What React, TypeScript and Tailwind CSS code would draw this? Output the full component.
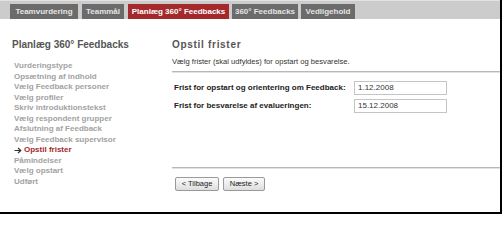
import React from "react";

const tabs = [
  { label: "Teamvurdering", w: "w-[68px]", active: false },
  { label: "Teammål", w: "w-[42px]", active: false },
  { label: "Planlæg 360° Feedbacks", w: "w-[101px]", active: true },
  { label: "360° Feedbacks", w: "w-[66px]", active: false },
  { label: "Vedligehold", w: "w-[54px]", active: false },
];

const nav = [
  "Vurderingstype",
  "Opsætning af indhold",
  "Vælg Feedback personer",
  "Vælg profiler",
  "Skriv introduktionstekst",
  "Vælg respondent grupper",
  "Afslutning af Feedback",
  "Vælg Feedback supervisor",
  "Opstil frister",
  "Påmindelser",
  "Vælg opstart",
  "Udført",
];

export default function App() {
  return (
    <div
      className="w-[502px] h-[214px] box-border border-r-2 border-b-2 border-black bg-white overflow-hidden"
      style={{ fontFamily: '"Liberation Sans", Arial, sans-serif' }}
    >
      <div className="h-[19px] bg-[#cccccc] border-t border-[#e2e2e2] flex items-end pl-[10px]">
        {tabs.map((t, i) => (
          <div
            key={t.label}
            className={`${t.w} h-[15px] flex items-center justify-center text-[8px] font-bold whitespace-nowrap ${
              i === 0 ? "" : i >= 3 ? "ml-[3px]" : "ml-[4px]"
            } ${t.active ? "bg-[#a3292b] text-white" : "bg-[#6b6b6b] text-[#e4e4e4]"}`}
          >
            {t.label}
          </div>
        ))}
      </div>
      <div className="flex">
        <div className="w-[172px] shrink-0 pl-[12px] pt-[20px]">
          <div className="text-[10px] leading-[12px] font-bold text-[#555555] whitespace-nowrap">
            Planlæg 360° Feedbacks
          </div>
          <div className="mt-[10px] pl-[2px]">
            {nav.map((n) =>
              n === "Opstil frister" ? (
                <div
                  key={n}
                  className="flex items-center text-[8px] leading-[10.5px] font-bold text-[#a3292b] whitespace-nowrap"
                >
                  <svg width="8" height="7" viewBox="0 0 8 7" className="mr-[2px]">
                    <path d="M0.5 3.5H6.5M4 1L6.8 3.5L4 6" stroke="#333" strokeWidth="1.2" fill="none" />
                  </svg>
                  {n}
                </div>
              ) : (
                <div
                  key={n}
                  className="text-[8px] leading-[10.5px] font-bold text-[#a2a2a2] whitespace-nowrap"
                >
                  {n}
                </div>
              )
            )}
          </div>
        </div>
        <div className="flex-1 pt-[20px]">
          <div className="text-[10px] leading-[12px] font-bold text-[#555555] tracking-[0.7px]">
            Opstil frister
          </div>
          <div className="mt-[6px] text-[7.6px] leading-[10px] text-[#333333] whitespace-nowrap">
            Vælg frister (skal udfyldes) for opstart og besvarelse.
          </div>
          <div className="mt-[4px] h-[1px] bg-[#b8b8b8] border-b border-[#e2e2e2] box-content" />
          <div className="mt-[8px] flex flex-col gap-[4px] pl-[2px]">
            <div className="flex items-center">
              <div className="w-[180px] text-[8px] font-bold text-[#222222] whitespace-nowrap">
                Frist for opstart og orientering om Feedback:
              </div>
              <div className="w-[93px] h-[14px] border border-[#c4c4c4] bg-white flex items-center pl-[3px] text-[8px] text-[#333333]">
                1.12.2008
              </div>
            </div>
            <div className="flex items-center">
              <div className="w-[180px] text-[8px] font-bold text-[#222222] whitespace-nowrap">
                Frist for besvarelse af evalueringen:
              </div>
              <div className="w-[93px] h-[14px] border border-[#c4c4c4] bg-white flex items-center pl-[3px] text-[8px] text-[#333333]">
                15.12.2008
              </div>
            </div>
          </div>
          <div className="mt-[54px] h-[1px] bg-[#b8b8b8] border-b border-[#e2e2e2] box-content" />
          <div className="mt-[8px] flex gap-[4px] pl-[3px]">
            <div className="w-[44px] h-[14px] border border-[#9a9a9a] rounded-[2px] bg-gradient-to-b from-[#fbfbfb] to-[#dedede] flex items-center justify-center text-[7.5px] text-[#222222] whitespace-nowrap">
              &lt; Tilbage
            </div>
            <div className="w-[42px] h-[14px] border border-[#9a9a9a] rounded-[2px] bg-gradient-to-b from-[#fbfbfb] to-[#dedede] flex items-center justify-center text-[7.5px] text-[#222222] whitespace-nowrap">
              Næste &gt;
            </div>
          </div>
        </div>
      </div>
    </div>
  );
}
